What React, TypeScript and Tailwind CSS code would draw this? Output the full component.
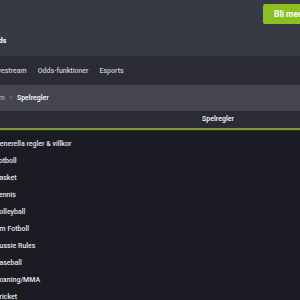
const navItems = ["Livestream", "Odds-funktioner", "Esports"];

const rules = [
  "Generella regler & villkor",
  "Fotboll",
  "Basket",
  "Tennis",
  "Volleyball",
  "Am Fotboll",
  "Aussie Rules",
  "Baseball",
  "Boxning/MMA",
  "Cricket",
];

export default function App() {
  return (
    <div
      className="w-[300px] h-[300px] overflow-hidden bg-[#1b1b23] text-[7px] font-medium text-[#e4e4e8]"
      style={{ fontFamily: "Roboto, 'Liberation Sans', sans-serif" }}
    >
      {/* top header */}
      <div className="h-[56px] bg-[#373945] flex flex-col">
        <div className="flex justify-end pt-[4px]">
          <button className="h-[20px] w-[37px] bg-[#8cc021] rounded-l-[2px] pl-[11px] text-left text-[8.5px] font-bold text-white whitespace-nowrap overflow-hidden">
            Bli medlem
          </button>
        </div>
        <div className="mt-[12px] -ml-[10px] text-[7px] font-bold text-white">Odds</div>
      </div>

      {/* nav */}
      <div className="h-[29px] bg-[#2b2c35] flex items-center gap-[11px] -ml-[8px] pt-[2px] text-[#c9cad0]">
        {navItems.map((n) => (
          <span key={n} className="whitespace-nowrap">
            {n}
          </span>
        ))}
      </div>

      {/* breadcrumb */}
      <div className="h-[26px] bg-[#44454f] flex items-center gap-[5px] -ml-[10px]">
        <span className="text-[#a8a9b0]">Hem</span>
        <span className="text-[#a8a9b0]">›</span>
        <span className="text-white">Spelregler</span>
      </div>

      {/* tab row */}
      <div className="h-[17px] bg-[#2a2b34] flex">
        <div className="w-[136px]" />
        <div className="flex-1 flex items-center justify-center text-white">Spelregler</div>
      </div>
      <div className="h-[2px] bg-[#7b9a2d]" />
      <div className="h-[1px] bg-[#2e2f36]" />

      {/* list */}
      <ul className="flex flex-col -ml-[5px] pt-[5px]">
        {rules.map((r) => (
          <li key={r} className="h-[17px] flex items-center whitespace-nowrap text-[#e6e6ea]">
            {r}
          </li>
        ))}
      </ul>
    </div>
  );
}
